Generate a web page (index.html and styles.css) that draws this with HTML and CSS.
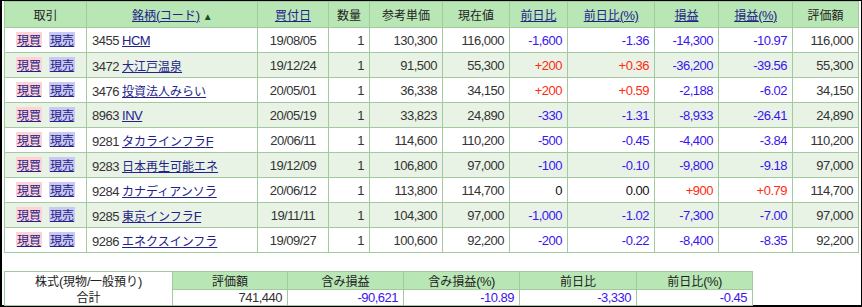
FILE: index.html
```html
<!DOCTYPE html>
<html lang="ja">
<head>
<meta charset="utf-8">
<link rel="stylesheet" href="styles.css">
</head>
<body>
<div class="frame">
<table class="main">
<colgroup>
<col style="width:82px"><col style="width:171px"><col style="width:71px"><col style="width:41px"><col style="width:73px"><col style="width:67px"><col style="width:58px"><col style="width:87px"><col style="width:64px"><col style="width:74px"><col style="width:66px">
</colgroup>
<thead>
<tr>
<th><span class="j">取引</span></th>
<th><a href="#"><span class="j">銘柄</span>(<span class="j">コード</span>)</a><span class="tri">▲</span></th>
<th><a href="#"><span class="j">買付日</span></a></th>
<th><span class="j">数量</span></th>
<th><span class="j">参考単価</span></th>
<th><span class="j">現在値</span></th>
<th><a href="#"><span class="j">前日比</span></a></th>
<th><a href="#"><span class="j">前日比</span>(%)</a></th>
<th><a href="#"><span class="j">損益</span></a></th>
<th><a href="#"><span class="j">損益</span>(%)</a></th>
<th><span class="j">評価額</span></th>
</tr>
</thead>
<tbody>
<tr>
<td class="trade"><a class="buy j" href="#">現買</a><a class="sell j" href="#">現売</a></td>
<td class="name">3455 <a href="#">HCM</a></td>
<td class="date">19/08/05</td>
<td class="num">1</td>
<td class="num">130,300</td>
<td class="num">116,000</td>
<td class="num neg">-1,600</td>
<td class="num neg">-1.36</td>
<td class="num neg">-14,300</td>
<td class="num neg">-10.97</td>
<td class="num">116,000</td>
</tr>
<tr>
<td class="trade"><a class="buy j" href="#">現買</a><a class="sell j" href="#">現売</a></td>
<td class="name">3472 <a class="j" href="#">大江戸温泉</a></td>
<td class="date">19/12/24</td>
<td class="num">1</td>
<td class="num">91,500</td>
<td class="num">55,300</td>
<td class="num pos">+200</td>
<td class="num pos">+0.36</td>
<td class="num neg">-36,200</td>
<td class="num neg">-39.56</td>
<td class="num">55,300</td>
</tr>
<tr>
<td class="trade"><a class="buy j" href="#">現買</a><a class="sell j" href="#">現売</a></td>
<td class="name">3476 <a class="j" href="#">投資法人みらい</a></td>
<td class="date">20/05/01</td>
<td class="num">1</td>
<td class="num">36,338</td>
<td class="num">34,150</td>
<td class="num pos">+200</td>
<td class="num pos">+0.59</td>
<td class="num neg">-2,188</td>
<td class="num neg">-6.02</td>
<td class="num">34,150</td>
</tr>
<tr>
<td class="trade"><a class="buy j" href="#">現買</a><a class="sell j" href="#">現売</a></td>
<td class="name">8963 <a href="#">INV</a></td>
<td class="date">20/05/19</td>
<td class="num">1</td>
<td class="num">33,823</td>
<td class="num">24,890</td>
<td class="num neg">-330</td>
<td class="num neg">-1.31</td>
<td class="num neg">-8,933</td>
<td class="num neg">-26.41</td>
<td class="num">24,890</td>
</tr>
<tr>
<td class="trade"><a class="buy j" href="#">現買</a><a class="sell j" href="#">現売</a></td>
<td class="name">9281 <a href="#"><span class="j">タカラインフラ</span>F</a></td>
<td class="date">20/06/11</td>
<td class="num">1</td>
<td class="num">114,600</td>
<td class="num">110,200</td>
<td class="num neg">-500</td>
<td class="num neg">-0.45</td>
<td class="num neg">-4,400</td>
<td class="num neg">-3.84</td>
<td class="num">110,200</td>
</tr>
<tr>
<td class="trade"><a class="buy j" href="#">現買</a><a class="sell j" href="#">現売</a></td>
<td class="name">9283 <a class="j" href="#">日本再生可能エネ</a></td>
<td class="date">19/12/09</td>
<td class="num">1</td>
<td class="num">106,800</td>
<td class="num">97,000</td>
<td class="num neg">-100</td>
<td class="num neg">-0.10</td>
<td class="num neg">-9,800</td>
<td class="num neg">-9.18</td>
<td class="num">97,000</td>
</tr>
<tr>
<td class="trade"><a class="buy j" href="#">現買</a><a class="sell j" href="#">現売</a></td>
<td class="name">9284 <a class="j" href="#">カナディアンソラ</a></td>
<td class="date">20/06/12</td>
<td class="num">1</td>
<td class="num">113,800</td>
<td class="num">114,700</td>
<td class="num zero">0</td>
<td class="num zero">0.00</td>
<td class="num pos">+900</td>
<td class="num pos">+0.79</td>
<td class="num">114,700</td>
</tr>
<tr>
<td class="trade"><a class="buy j" href="#">現買</a><a class="sell j" href="#">現売</a></td>
<td class="name">9285 <a href="#"><span class="j">東京インフラ</span>F</a></td>
<td class="date">19/11/11</td>
<td class="num">1</td>
<td class="num">104,300</td>
<td class="num">97,000</td>
<td class="num neg">-1,000</td>
<td class="num neg">-1.02</td>
<td class="num neg">-7,300</td>
<td class="num neg">-7.00</td>
<td class="num">97,000</td>
</tr>
<tr>
<td class="trade"><a class="buy j" href="#">現買</a><a class="sell j" href="#">現売</a></td>
<td class="name">9286 <a class="j" href="#">エネクスインフラ</a></td>
<td class="date">19/09/27</td>
<td class="num">1</td>
<td class="num">100,600</td>
<td class="num">92,200</td>
<td class="num neg">-200</td>
<td class="num neg">-0.22</td>
<td class="num neg">-8,400</td>
<td class="num neg">-8.35</td>
<td class="num">92,200</td>
</tr>
</tbody>
</table>

<table class="sum">
<colgroup>
<col style="width:168px"><col style="width:115px"><col style="width:116px"><col style="width:116px"><col style="width:117px"><col style="width:116px">
</colgroup>
<tr class="sum-head">
<td class="label" rowspan="2"><span class="j">株式</span>(<span class="j">現物</span>/<span class="j">一般預り</span>)<br><span class="j">合計</span></td>
<th><span class="j">評価額</span></th>
<th><span class="j">含み損益</span></th>
<th><span class="j">含み損益</span>(%)</th>
<th><span class="j">前日比</span></th>
<th><span class="j">前日比</span>(%)</th>
</tr>
<tr class="sum-data">
<td class="num">741,440</td>
<td class="num neg">-90,621</td>
<td class="num neg">-10.89</td>
<td class="num neg">-3,330</td>
<td class="num neg">-0.45</td>
</tr>
</table>
</div>
</body>
</html>
```

FILE: styles.css
```css
html, body {
  margin: 0;
  padding: 0;
  background: #fff;
}
body {
  font-family: "Liberation Sans", Arial, "Noto Sans CJK JP", sans-serif;
  font-size: 13px;
  letter-spacing: -0.5px;
  color: #333;
}
.j {
  font-family: "Noto Sans CJK JP", sans-serif;
  font-size: 12px;
  letter-spacing: 0;
}
.frame {
  box-sizing: border-box;
  width: 862px;
  height: 307px;
  border-style: solid;
  border-color: #000;
  border-width: 1px 1px 2px 2px;
  padding: 0 1px 0 2px;
}
a {
  color: #22228a;
  text-decoration: underline;
}
table {
  border-collapse: collapse;
  table-layout: fixed;
}
.main {
  width: 854px;
}
.main th,
.main td,
.sum th,
.sum td {
  border: 1px solid #a3c9a0;
  padding: 0 5px;
  white-space: nowrap;
  overflow: hidden;
}
.main th {
  background: #b9e6b5;
  font-weight: normal;
  color: #222;
  height: 25px;
  text-align: center;
}
.main td {
  height: 24px;
}
.main tbody tr:nth-child(even) td {
  background: #e8f3e6;
}
.tri {
  color: #1f4d1f;
  font-size: 10px;
  margin-left: 3px;
}
.trade {
  text-align: center;
}
.trade a {
  display: inline-block;
  line-height: 15px;
  padding: 0 1px;
}
.buy {
  background: #ffd2d4;
  margin-right: 7px;
}
.sell {
  background: #c9c9f2;
}
.name {
  text-align: left;
}
.date {
  text-align: center;
}
.num {
  text-align: right;
}
.neg {
  color: #3a14f0;
}
.pos {
  color: #ff2a10;
}
.zero {
  color: #111;
}
.sum {
  width: 748px;
  margin-top: 18px;
}
.sum th {
  background: #b9e6b5;
  font-weight: normal;
  color: #222;
  height: 17px;
  line-height: 15px;
  text-align: center;
}
.sum td {
  height: 14px;
  line-height: 15px;
}
.sum .label {
  text-align: center;
  background: #fff;
  color: #222;
}
```
